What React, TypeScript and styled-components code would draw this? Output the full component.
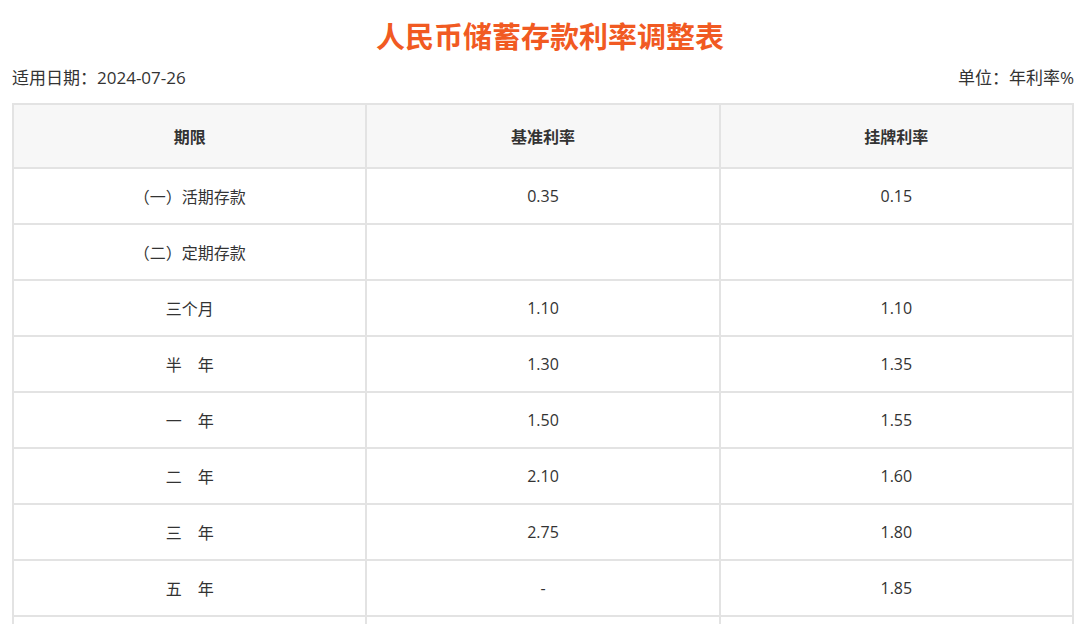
import React from "react";
import styled, { createGlobalStyle } from "styled-components";

const Global = createGlobalStyle`
  html, body { margin: 0; padding: 0; background: #fff; }
  body { font-family: "Open Sans", "Noto Sans CJK SC", sans-serif; color: #333; }
`;

const Page = styled.div`
  padding: 0 6px 0 12px;
  width: 1080px;
  box-sizing: border-box;
`;

const Title = styled.h1`
  margin: 0;
  padding: 15px 0 0 14px;
  height: 45px;
  text-align: center;
  font-size: 29px;
  line-height: 40px;
  font-weight: 700;
  color: #f15a22;
  font-family: "Noto Sans CJK SC", sans-serif;
`;

const InfoBar = styled.div`
  display: flex;
  justify-content: space-between;
  align-items: center;
  height: 32px;
  font-size: 17px;
  color: #333;
  margin-bottom: 11px;
`;

const Table = styled.table`
  width: 1062px;
  border-collapse: collapse;
  table-layout: fixed;
  border: 2px solid #e3e3e3;
`;

const Th = styled.th`
  height: 62px;
  background: #f7f7f7;
  border: 2px solid #e3e3e3;
  font-size: 16px;
  font-weight: 700;
  color: #333;
  text-align: center;
  padding: 0;
`;

const Td = styled.td`
  height: 54px;
  border: 2px solid #e3e3e3;
  font-size: 16px;
  color: #333;
  text-align: center;
  padding: 0;
  white-space: pre;
`;

const rows: [string, string, string][] = [
  ["（一）活期存款", "0.35", "0.15"],
  ["（二）定期存款", "", ""],
  ["三个月", "1.10", "1.10"],
  ["半\u3000年", "1.30", "1.35"],
  ["一\u3000年", "1.50", "1.55"],
  ["二\u3000年", "2.10", "1.60"],
  ["三\u3000年", "2.75", "1.80"],
  ["五\u3000年", "-", "1.85"],
  ["", "", ""],
];

export default function App() {
  return (
    <>
      <Global />
      <Page>
        <Title>人民币储蓄存款利率调整表</Title>
        <InfoBar>
          <span>适用日期：2024-07-26</span>
          <span>单位：年利率%</span>
        </InfoBar>
        <Table>
          <thead>
            <tr>
              <Th>期限</Th>
              <Th>基准利率</Th>
              <Th>挂牌利率</Th>
            </tr>
          </thead>
          <tbody>
            {rows.map((r, i) => (
              <tr key={i}>
                <Td>{r[0]}</Td>
                <Td>{r[1]}</Td>
                <Td>{r[2]}</Td>
              </tr>
            ))}
          </tbody>
        </Table>
      </Page>
    </>
  );
}
